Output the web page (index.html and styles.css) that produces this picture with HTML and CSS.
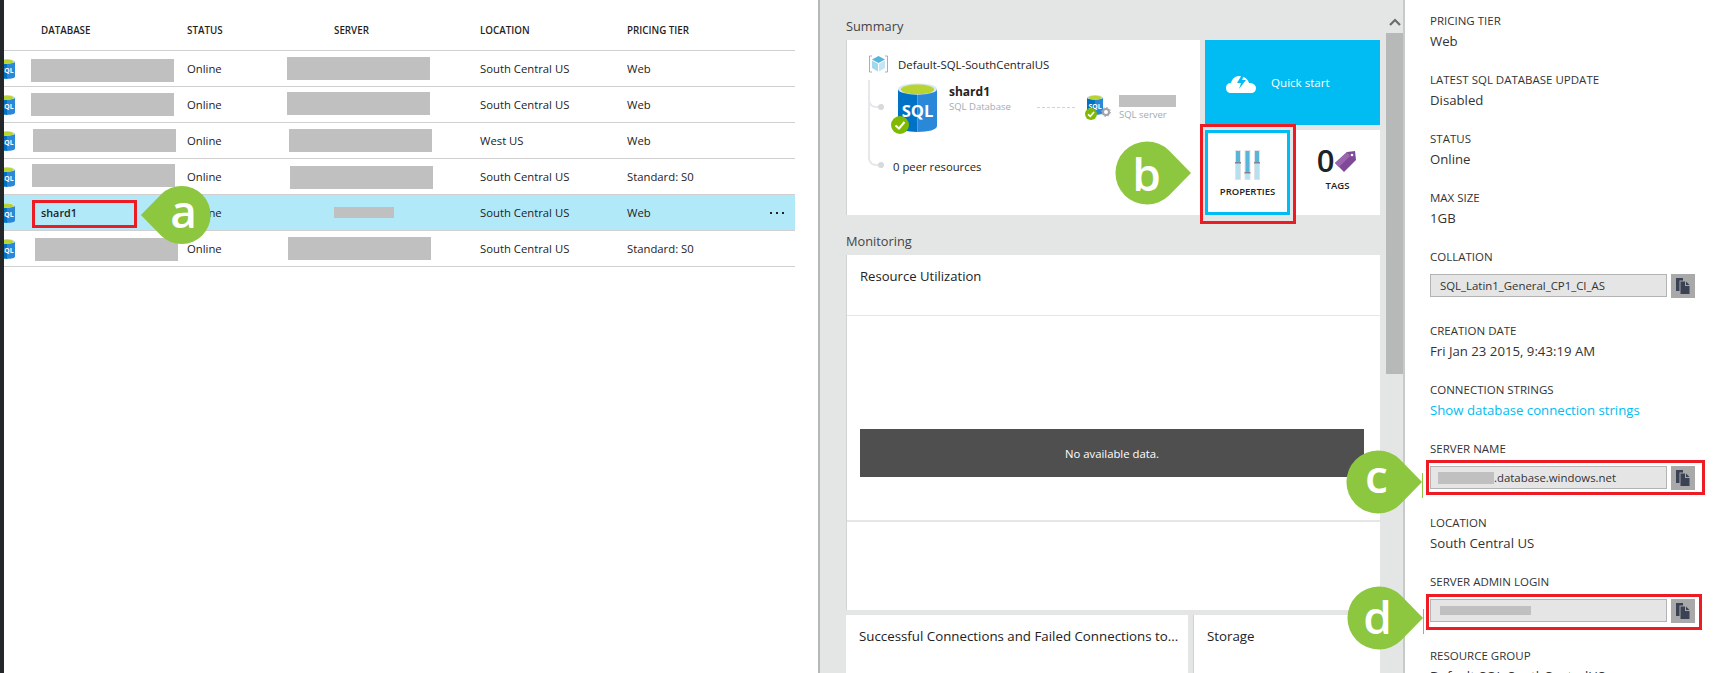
FILE: index.html
```html
<!DOCTYPE html>
<html lang="en">
<head>
<meta charset="utf-8">
<title>SQL databases</title>
<link rel="stylesheet" href="styles.css">
</head>
<body>
<svg class="defs" width="0" height="0" aria-hidden="true">
  <symbol id="sql" viewBox="0 0 40 50">
    <path d="M0 6V44C0 48 9 50 20 50V6Z" fill="#0072c6"/>
    <path d="M40 6V44C40 48 31 50 20 50V6Z" fill="#2b88d8"/>
    <ellipse cx="20" cy="6" rx="20" ry="6" fill="#dbe9ef"/>
    <ellipse cx="20" cy="6.5" rx="17" ry="5" fill="#b8d432"/>
    <text x="20" y="35" class="sql-text">SQL</text>
  </symbol>
  <symbol id="copy" viewBox="0 0 14 16">
    <path d="M0 0H7V2.500H3.500V13H0Z" fill="#3a4254"/>
    <path d="M4.500 3.500H9V8H13.500V16H4.500Z" fill="#3a4254"/>
    <path d="M10 3.500L13.500 7H10Z" fill="#3a4254"/>
  </symbol>
  <symbol id="drop" viewBox="0 0 78 64">
    <path d="M77 32L55 9.500A31.500 31.500 0 1 0 55 54.500Z"/>
  </symbol>
</svg>

<div class="page">
  <div class="strip"></div>

  <main class="list">
    <div class="row head">
      <div class="c-icon"></div>
      <div class="c-db">DATABASE</div>
      <div class="c-status">STATUS</div>
      <div class="c-server head-server">SERVER</div>
      <div class="c-loc">LOCATION</div>
      <div class="c-tier">PRICING TIER</div>
    </div>

    <div class="row">
      <div class="c-icon"><svg class="row-icon"><use href="#sql"/></svg></div>
      <div class="c-db"><span class="mask mask-db d1"></span></div>
      <div class="c-status">Online</div>
      <div class="c-server"><span class="mask mask-sv s1"></span></div>
      <div class="c-loc">South Central US</div>
      <div class="c-tier">Web</div>
    </div>
    <div class="row">
      <div class="c-icon"><svg class="row-icon"><use href="#sql"/></svg></div>
      <div class="c-db"><span class="mask mask-db d2"></span></div>
      <div class="c-status">Online</div>
      <div class="c-server"><span class="mask mask-sv s2"></span></div>
      <div class="c-loc">South Central US</div>
      <div class="c-tier">Web</div>
    </div>
    <div class="row">
      <div class="c-icon"><svg class="row-icon"><use href="#sql"/></svg></div>
      <div class="c-db"><span class="mask mask-db d3"></span></div>
      <div class="c-status">Online</div>
      <div class="c-server"><span class="mask mask-sv s3"></span></div>
      <div class="c-loc">West US</div>
      <div class="c-tier">Web</div>
    </div>
    <div class="row">
      <div class="c-icon"><svg class="row-icon"><use href="#sql"/></svg></div>
      <div class="c-db"><span class="mask mask-db d4"></span></div>
      <div class="c-status">Online</div>
      <div class="c-server"><span class="mask mask-sv s4"></span></div>
      <div class="c-loc">South Central US</div>
      <div class="c-tier">Standard: S0</div>
    </div>
    <div class="row selected">
      <div class="c-icon"><svg class="row-icon"><use href="#sql"/></svg></div>
      <div class="c-db strong">shard1</div>
      <div class="c-status">Online</div>
      <div class="c-server"><span class="mask s5"></span></div>
      <div class="c-loc">South Central US</div>
      <div class="c-tier">Web</div>
      <div class="dots"><i></i><i></i><i></i></div>
    </div>
    <div class="row">
      <div class="c-icon"><svg class="row-icon"><use href="#sql"/></svg></div>
      <div class="c-db"><span class="mask mask-db d6"></span></div>
      <div class="c-status">Online</div>
      <div class="c-server"><span class="mask mask-sv s6"></span></div>
      <div class="c-loc">South Central US</div>
      <div class="c-tier">Standard: S0</div>
    </div>
  </main>

  <section class="blade">
    <div class="blade-body">
      <h2 class="section-title">Summary</h2>
      <div class="summary">
        <div class="map">
          <div class="tree-line"></div>
          <div class="tree-branch b-one"></div>
          <div class="tree-branch b-two"></div>
          <div class="rg">
            <svg class="rg-icon" viewBox="0 0 21 18">
              <path d="M4 1H1.500V17H4M17 1H19.500V17H17" fill="none" stroke="#a8aeb2" stroke-width="1"/>
              <path d="M10.500 1L17 4.500L10.500 8L4 4.500Z" fill="#59b4d9"/>
              <path d="M4 5.500L10 8.800V16.500L4 13Z" fill="#a0d8ef"/>
              <path d="M17 5.500L11 8.800V16.500L17 13Z" fill="#c4e6f4"/>
            </svg>
            <span>Default-SQL-SouthCentralUS</span>
          </div>
          <div class="resources">
            <div class="db-icon">
              <svg class="db-svg"><use href="#sql"/></svg>
              <svg class="check big" viewBox="0 0 18 18"><circle cx="9" cy="9" r="9" fill="#7fba00"/><path d="M4.500 9.500L8 12.500L13.500 6" fill="none" stroke="#fff" stroke-width="2"/></svg>
            </div>
            <div class="db-text">
              <div class="db-name">shard1</div>
              <div class="db-type">SQL Database</div>
            </div>
            <div class="dash"></div>
            <div class="srv-icon">
              <svg class="srv-svg"><use href="#sql"/></svg>
              <svg class="gear" viewBox="0 0 10 10"><circle cx="5" cy="5" r="3" fill="none" stroke="#a0a4a8" stroke-width="2"/><circle cx="5" cy="5" r="4.500" fill="none" stroke="#a0a4a8" stroke-width="1" stroke-dasharray="1.500 2"/></svg>
              <svg class="check small" viewBox="0 0 18 18"><circle cx="9" cy="9" r="9" fill="#7fba00"/><path d="M4.500 9.500L8 12.500L13.500 6" fill="none" stroke="#fff" stroke-width="2.500"/></svg>
            </div>
            <div class="srv-text">
              <span class="mask-srv"></span>
              <div class="db-type">SQL server</div>
            </div>
          </div>
          <div class="peers">0 peer resources</div>
        </div>
        <div class="tiles">
          <div class="tile-wide">
            <svg class="cloud" viewBox="0 0 30 20">
              <path d="M5 20C2 20 0 18 0 15C0 12 2 10 5 10C6 6 9 3 13 3C18 3 22 6 23 10C27 10 30 12 30 15C30 18 28 20 25 20Z" fill="#fff"/>
              <path d="M17 0L11 10H15L13 16L20 7H16L19 0Z" fill="#00bcf2"/>
            </svg>
            <span>Quick start</span>
          </div>
          <div class="tile props">
            <svg class="sliders" viewBox="0 0 25 30">
              <g fill="#e1e4e6"><rect width="6" height="30"/><rect x="9.500" width="6" height="30"/><rect x="19" width="6" height="30"/></g>
              <g fill="#59b4d9"><rect x="1" y="1" width="4" height="11"/><rect x="10.500" y="1" width="4" height="21"/><rect x="20" y="1" width="4" height="11"/></g>
              <g fill="#b8dff0"><rect x="1" y="13" width="4" height="16"/><rect x="10.500" y="23" width="4" height="6"/><rect x="20" y="13" width="4" height="16"/></g>
              <g fill="#7d868c"><rect y="12" width="6" height="1.500"/><rect x="9.500" y="22" width="6" height="1.500"/><rect x="19" y="12" width="6" height="1.500"/></g>
            </svg>
            <span class="tile-label">PROPERTIES</span>
          </div>
          <div class="tile tags">
            <div class="tag-top">
              <span class="zero">0</span>
              <svg class="tag-icon" viewBox="0 0 21 21">
                <path d="M0 12L12 1L20 0L21 9L9 21Z" fill="#804998"/>
                <path d="M0 12L12 1L15 5L4 16Z" fill="#9a66ad"/>
                <circle cx="17" cy="4" r="1.300" fill="#fff"/>
              </svg>
            </div>
            <span class="tile-label">TAGS</span>
          </div>
        </div>
      </div>

      <h2 class="section-title second">Monitoring</h2>
      <div class="chart-card">
        <div class="chart-head">Resource Utilization</div>
        <div class="chart-body"><div class="nodata">No available data.</div></div>
        <div class="chart-foot"></div>
      </div>
      <div class="bottom-cards">
        <div class="mini wide">Successful Connections and Failed Connections to...</div>
        <div class="mini narrow">Storage</div>
      </div>
    </div>
    <div class="scrollbar">
      <svg class="chev" viewBox="0 0 12 8"><path d="M1 7L6 2L11 7" fill="none" stroke="#6b6e6e" stroke-width="2.200"/></svg>
      <div class="thumb"></div>
    </div>
  </section>

  <aside class="props-panel">
    <div class="field"><div class="label">PRICING TIER</div><div class="value">Web</div></div>
    <div class="field"><div class="label">LATEST SQL DATABASE UPDATE</div><div class="value">Disabled</div></div>
    <div class="field"><div class="label">STATUS</div><div class="value">Online</div></div>
    <div class="field"><div class="label">MAX SIZE</div><div class="value">1GB</div></div>
    <div class="field boxed"><div class="label">COLLATION</div>
      <div class="copy-row"><div class="input">SQL_Latin1_General_CP1_CI_AS</div><div class="copy-btn"><svg class="copy-icon"><use href="#copy"/></svg></div></div>
    </div>
    <div class="field"><div class="label">CREATION DATE</div><div class="value">Fri Jan 23 2015, 9:43:19 AM</div></div>
    <div class="field"><div class="label">CONNECTION STRINGS</div><div class="value link">Show database connection strings</div></div>
    <div class="field boxed"><div class="label">SERVER NAME</div>
      <div class="copy-row"><div class="input"><span class="mask-inline"></span>.database.windows.net</div><div class="copy-btn"><svg class="copy-icon"><use href="#copy"/></svg></div></div>
    </div>
    <div class="field"><div class="label">LOCATION</div><div class="value">South Central US</div></div>
    <div class="field boxed"><div class="label">SERVER ADMIN LOGIN</div>
      <div class="copy-row"><div class="input"><span class="mask-login"></span></div><div class="copy-btn"><svg class="copy-icon"><use href="#copy"/></svg></div></div>
    </div>
    <div class="field"><div class="label">RESOURCE GROUP</div><div class="value">Default-SQL-SouthCentralUS</div></div>
  </aside>
</div>

<div class="red red-a"></div>
<div class="red red-b"></div>
<div class="red red-c"></div>
<div class="red red-d"></div>

<div class="callout co-a"><svg class="drop flip"><use href="#drop"/></svg><span class="co-letter">a</span></div>
<div class="callout co-b"><svg class="drop"><use href="#drop"/></svg><span class="co-letter">b</span></div>
<div class="callout co-c"><svg class="drop"><use href="#drop"/></svg><span class="co-letter">c</span></div>
<div class="callout co-d"><svg class="drop"><use href="#drop"/></svg><span class="co-letter">d</span></div>
</body>
</html>
```

FILE: styles.css
```css
* { box-sizing: border-box; }
html, body { margin: 0; padding: 0; }
body {
  width: 1717px;
  height: 673px;
  overflow: hidden;
  position: relative;
  background: #fff;
  color: #222;
  font-family: "Open Sans", "Liberation Sans", sans-serif;
  font-size: 11.3px;
}
.defs { position: absolute; }
.sql-text { font-family: "Open Sans", sans-serif; font-weight: 700; font-size: 17px; fill: #fff; text-anchor: middle; }

.page { display: flex; height: 673px; }
.strip { width: 4px; background: #23272a; flex: none; }

/* list */
.list { width: 816px; flex: none; padding-right: 23px; border-right: 2px solid #b4b8b8; }
.row {
  display: grid;
  grid-template-columns: 37px 146px 100px 193px 147px 1fr;
  align-items: center;
  height: 36px;
  border-bottom: 1px solid #d0d0d0;
  position: relative;
}
.row.head { height: 51px; font-size: 9.8px; font-weight: 600; color: #1f1f1f; padding-top: 11px; }
.head-server { padding-left: 47px; }
.row.selected { background: #b2e9f9; }
.strong { font-weight: 600; font-size: 10.8px; }
.c-icon { height: 20px; overflow: hidden; }
.row-icon { display: block; width: 18px; height: 20px; margin-left: -6px; }
.c-db, .c-server { position: relative; height: 100%; display: flex; align-items: center; }

.mask, .mask-srv, .mask-inline, .mask-login { background: #c0c0c0; display: block; }
.mask { position: absolute; }
.mask-db { width: 143px; height: 23px; }
.mask-sv { width: 143px; height: 23px; }
.d1 { left: -10px; top: 8px; }
.d2 { left: -10px; top: 6px; }
.d3 { left: -8px; top: 6px; }
.d4 { left: -9px; top: 5px; }
.d6 { left: -6px; top: 7px; }
.s1 { left: 0; top: 6px; }
.s2 { left: 0; top: 5px; }
.s3 { left: 2px; top: 6px; }
.s4 { left: 3px; top: 7px; }
.s5 { left: 47px; top: 12px; width: 60px; height: 11px; }
.s6 { left: 1px; top: 6px; }
.dots { position: absolute; left: 766px; top: 17px; display: flex; gap: 4px; }
.dots i { width: 2px; height: 2px; background: #222; display: block; }

/* blade */
.blade { flex: none; width: 583px; background: #e4e6e5; display: flex; }
.blade-body { width: 540px; margin-left: 26px; flex: none; }
.section-title { margin: 0; font-weight: 400; font-size: 12.8px; line-height: 18px; padding-top: 17px; height: 40px; color: #444; }
.section-title.second { height: 40px; padding-top: 17px; }
.summary { display: flex; gap: 5px; height: 175px; }
.map { width: 354px; background: #fff; border-left: 1px solid #d0d3d3; position: relative; padding: 14px 0 0 21px; font-size: 11.4px; }
.tree-line { position: absolute; left: 21px; top: 40px; width: 2px; height: 80px; background: #e6e8ea; }
.tree-branch { position: absolute; left: 21px; width: 13px; height: 12px; border-left: 2px solid #e6e8ea; border-bottom: 2px solid #e6e8ea; border-bottom-left-radius: 8px; }
.tree-branch::after { content: ""; position: absolute; right: -3px; bottom: -4px; width: 6px; height: 6px; border-radius: 50%; background: #d6dadd; }
.b-one { top: 56px; }
.b-two { top: 114px; }
.rg { display: flex; align-items: center; gap: 9px; height: 20px; }
.rg-icon { width: 21px; height: 18px; flex: none; }
.resources { position: relative; display: flex; height: 50px; margin: 9px 0 0 30px; }
.db-icon { position: relative; width: 51px; flex: none; }
.db-svg { display: block; width: 39px; height: 49px; }
.check { position: absolute; display: block; }
.check.big { width: 18px; height: 18px; left: -7px; top: 33px; }
.db-text { width: 88px; flex: none; padding-top: 0; }
.db-name { font-weight: 700; font-size: 12px; line-height: 17px; }
.db-type { font-size: 9.5px; line-height: 14px; color: #a2acb2; }
.dash { width: 38px; height: 0; border-top: 1px dashed #cfd3d6; margin-top: 24px; flex: none; }
.srv-icon { position: relative; width: 32px; margin-left: 12px; flex: none; }
.srv-svg { display: block; width: 16px; height: 20px; margin-top: 12px; }
.gear { position: absolute; width: 10px; height: 10px; left: 14px; top: 24px; }
.check.small { width: 12px; height: 12px; left: -2px; top: 25px; }
.srv-text { padding-top: 12px; }
.mask-srv { width: 57px; height: 12px; margin-bottom: 1px; }
.peers { position: absolute; left: 46px; top: 118px; line-height: 18px; font-size: 11.3px; }
.tiles { width: 175px; display: grid; grid-template-columns: 85px 85px; grid-template-rows: 85px 85px; gap: 5px; }
.tile-wide { grid-column: 1 / 3; background: #00bcf2; color: #fff; display: flex; align-items: center; gap: 15px; padding-left: 21px; font-size: 11.6px; }
.cloud { width: 30px; height: 20px; flex: none; }
.tile { background: #fff; display: flex; flex-direction: column; align-items: center; }
.props { border: 3px solid #00bcf2; padding-top: 17px; }
.sliders { width: 25px; height: 30px; display: block; margin-bottom: 4px; }
.tile-label { font-size: 9.5px; font-weight: 600; line-height: 15px; color: #222; }
.tags { padding-top: 13px; }
.tag-top { display: flex; align-items: center; gap: 1px; height: 33px; margin-bottom: 2px; margin-left: -2px; }
.zero { font-size: 31px; line-height: 33px; font-weight: 600; color: #1d2429; font-family: "Open Sans", sans-serif; padding-top: 1px; }
.tag-icon { width: 21px; height: 21px; display: block; margin-top: 3px; }

.chart-card { height: 355px; background: #fff; border-left: 1px solid #d0d3d3; width: 534px; display: flex; flex-direction: column; }
.chart-head { height: 61px; flex: none; padding: 12px 0 0 13px; font-size: 13.1px; line-height: 18px; border-bottom: 1px solid #e6e6e6; }
.chart-body { height: 206px; flex: none; padding: 113px 0 0 13px; border-bottom: 2px solid #e6e6e6; }
.nodata { height: 48px; width: 504px; background: #4f4f4f; color: #fff; display: flex; align-items: center; justify-content: center; font-size: 11.3px; }
.chart-foot { flex: 1; }
.bottom-cards { display: flex; gap: 5px; margin-top: 5px; width: 534px; }
.mini { height: 60px; background: #fff; padding: 12px 0 0 13px; font-size: 13.3px; line-height: 18px; white-space: nowrap; }
.wide { width: 342px; flex: none; }
.narrow { width: 187px; flex: none; border-left: 1px solid #d0d3d3; }

.scrollbar { width: 17px; flex: none; display: flex; flex-direction: column; }
.chev { display: block; width: 12px; height: 8px; margin: 18px auto 7px; }
.thumb { width: 17px; height: 341px; background: #b6b9b7; }

/* properties */
.props-panel { flex: 1; border-left: 2px solid #c6caca; padding: 11px 0 0 25px; overflow: hidden; height: 673px; }
.field { margin-bottom: 19px; }
.label { font-size: 11.5px; line-height: 20px; color: #333; white-space: nowrap; }
.value { font-size: 13.2px; line-height: 20px; color: #333; white-space: nowrap; }
.link { color: #00bcf2; }
.field.boxed { margin-bottom: 23px; }
.copy-row { display: flex; gap: 4px; margin-top: 7px; }
.input { width: 237px; height: 23px; background: #e5e5e5; border: 1px solid #b3b3b3; font-size: 11.4px; line-height: 21px; padding-left: 9px; color: #333; display: flex; align-items: center; white-space: nowrap; }
.copy-btn { width: 24px; height: 24px; background: #a9a9a9; display: flex; align-items: center; justify-content: center; flex: none; }
.copy-icon { width: 14px; height: 16px; display: block; }
.mask-inline { width: 56px; height: 12px; margin-left: -2px; }
.mask-login { width: 91px; height: 9px; margin-left: 0; }

/* annotations */
.red { position: absolute; border: 3px solid #ed1c24; }
.red-a { left: 32px; top: 200px; width: 105px; height: 28px; }
.red-b { left: 1200px; top: 124px; width: 96px; height: 100px; }
.red-c { left: 1426px; top: 460px; width: 279px; height: 35px; }
.red-d { left: 1426px; top: 594px; width: 276px; height: 36px; }
.callout { position: absolute; width: 78px; height: 64px; }
.drop { display: block; width: 78px; height: 64px; fill: #8dc63f; }
.flip { transform: scaleX(-1); }
.co-letter { position: absolute; top: 0; width: 63px; height: 64px; display: flex; align-items: center; justify-content: center; color: #fff; font-size: 46px; font-weight: 600; line-height: 1; padding-bottom: 8px; }
.co-a { left: 140px; top: 185px; width: 72px; height: 60px; }
.co-a .drop { width: 72px; height: 60px; }
.co-a .co-letter { left: 12px; height: 60px; padding-bottom: 11px; }
.co-b { left: 1114px; top: 141px; }
.co-b .co-letter { left: 1px; padding-bottom: 0; }
.co-c { left: 1345px; top: 450px; }
.co-c .co-letter { left: 0; padding-bottom: 15px; }
.co-c::after, .co-d::after { content: ""; position: absolute; left: 77px; top: 23px; width: 1px; height: 25px; background: #8dc63f; }
.co-d { left: 1346px; top: 586px; }
.co-d .co-letter { left: 0; padding-bottom: 5px; }
```
